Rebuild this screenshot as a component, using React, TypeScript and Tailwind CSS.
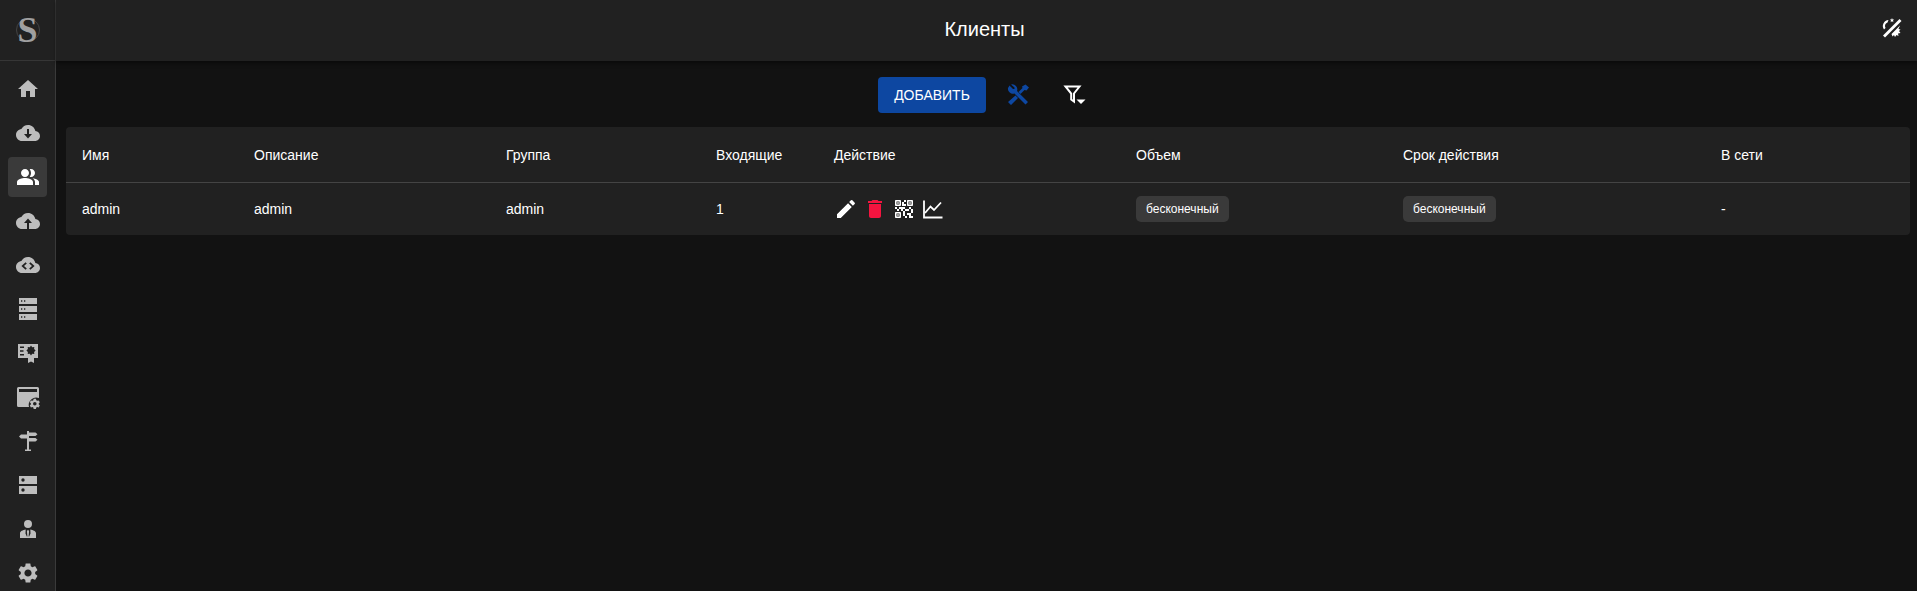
import type { ReactNode } from "react"

function Icon({ children, className = "" }: { children: ReactNode; className?: string }) {
    return (
        <svg viewBox="0 0 24 24" fill="currentColor" className={`block h-6 w-6 ${className}`}>
            {children}
        </svg>
    )
}

const CLOUD = "M19.35 10.04C18.67 6.59 15.64 4 12 4 9.11 4 6.6 5.64 5.35 8.04 2.34 8.36 0 10.91 0 14c0 3.31 2.69 6 6 6h13c2.76 0 5-2.24 5-5 0-2.64-2.05-4.78-4.65-4.96"

const navIcons: ReactNode[] = [
    <path key="home" d="M10 20v-6h4v6h5v-8h3L12 3 2 12h3v8z" />,
    <path key="down" fillRule="evenodd" d={`${CLOUD}M11 8v5H8l4 4.5 4-4.5h-3V8z`} />,
    <path key="group" d="M16.67 13.13C18.04 14.06 19 15.32 19 17v3h4v-3c0-2.18-3.57-3.47-6.33-3.87M15 12c2.21 0 4-1.79 4-4s-1.79-4-4-4c-.47 0-.91.1-1.33.24C14.5 5.27 15 6.58 15 8s-.5 2.73-1.33 3.76c.42.14.86.24 1.33.24M9 12c2.21 0 4-1.79 4-4s-1.79-4-4-4-4 1.79-4 4 1.79 4 4 4m0 1c-2.67 0-8 1.34-8 4v3h16v-3c0-2.66-5.33-4-8-4" />,
    <path key="up" fillRule="evenodd" d={`${CLOUD}M11 20v-6H8l4-4.5 4 4.5h-3v6z`} />,
    <path key="code" fillRule="evenodd" d={`${CLOUD}M9.6 9.2 5.4 13l4.2 3.8 1.2-1.3L8 13l2.8-2.5zM14.4 9.2l-1.2 1.3L16 13l-2.8 2.5 1.2 1.3 4.2-3.8z`} />,
    <path key="storage" fillRule="evenodd" d="M3 1h18v6H3zM5 3.300v1.400h1.300V3.300zM8 3.300v1.400h1.300V3.300zM3 9h18v6H3zM5 11.300v1.400h1.300v-1.400zM8 11.300v1.400h1.300v-1.400zM3 17h18v6H3zM5 19.300v1.400h1.300v-1.400zM8 19.300v1.400h1.300v-1.400z" />,
    <path key="cert" fillRule="evenodd" d="M2 3h20v14h-4v5l-3-1.600L12 22v-5H2zM4 5.400V7h4V5.400zM4 9.200v1.600h3.500V9.200zM4 13v1.600h4V13zM15 4.500l-1.200 1.700-2.100-.2.2 2.100L10.400 9.500l1.500 1.400-.2 2.100 2.100-.2 1.200 1.700 1.200-1.700 2.100.2-.2-2.100 1.500-1.400-1.500-1.400.2-2.100-2.100.2z" />,
    <g key="web">
        <path fillRule="evenodd" d="M2.500 2h19A1.500 1.500 0 0 1 23 3.500V13a7.500 7.500 0 0 0-10 9H2.500A1.500 1.500 0 0 1 1 20.500v-17A1.500 1.500 0 0 1 2.500 2M3 4v3h18V4z" />
        <path fillRule="evenodd" d="M17.700 13.500h2.600l.3 1.500 1.200.7 1.500-.5 1.300 2.200-1.200 1v1.400l1.200 1-1.300 2.200-1.500-.5-1.200.7-.3 1.500h-2.600l-.3-1.500-1.200-.7-1.500.5-1.300-2.200 1.200-1v-1.400l-1.200-1 1.300-2.200 1.500.5 1.200-.7zM19 17a2 2 0 1 0 0 4 2 2 0 0 0 0-4" transform="translate(1.700 1.700) scale(.9)" />
    </g>,
    <path key="sign" d="M11 2h2v1.500h6.500L21.500 5.300 19.500 7H13v2h6.500l2 1.800-2 1.700H13V20.500h2V22H9v-1.500h2V9.500H5L3 7.500 5 5.500h6z" />,
    <path key="dns" fillRule="evenodd" d="M3 3h18v8H3zM7 5.300a1.700 1.700 0 1 0 0 3.400 1.700 1.700 0 0 0 0-3.400M3 13h18v8H3zM7 15.300a1.700 1.700 0 1 0 0 3.400 1.700 1.700 0 0 0 0-3.400" />,
    <path key="person" fillRule="evenodd" d="M12 3a4 4 0 1 1 0 8 4 4 0 0 1 0-8M9.700 12.500l-.2 4 1.300 3h.6l-.5-5.500 1.100-1.200 1.100 1.200-.5 5.500h.6l1.300-3-.2-4c2.800.5 5.700 1.800 5.700 3.800V21H4v-4.700c0-2 2.900-3.300 5.700-3.800" />,
    <path key="gear" d="M19.140 12.940c.04-.3.06-.61.06-.94 0-.32-.02-.64-.07-.94l2.030-1.580c.18-.14.23-.41.120-.61l-1.920-3.320c-.12-.22-.37-.29-.59-.22l-2.390.96c-.5-.38-1.030-.7-1.620-.94l-.36-2.540c-.04-.24-.24-.41-.48-.41h-3.840c-.24 0-.43.17-.47.41l-.36 2.540c-.59.24-1.130.57-1.620.94l-2.390-.96c-.22-.08-.47 0-.59.22L2.740 8.870c-.12.21-.08.47.12.61l2.030 1.580c-.05.3-.09.63-.09.94s.02.64.07.94l-2.030 1.580c-.18.14-.23.41-.12.61l1.920 3.320c.12.22.37.29.59.22l2.390-.96c.5.38 1.030.7 1.620.94l.36 2.540c.05.24.24.41.48.41h3.840c.24 0 .44-.17.47-.41l.36-2.540c.59-.24 1.130-.56 1.620-.94l2.390.96c.22.08.47 0 .59-.22l1.920-3.320c.12-.22.07-.47-.12-.61zM12 15.600c-1.980 0-3.600-1.620-3.600-3.600s1.620-3.600 3.600-3.600 3.600 1.620 3.600 3.600-1.620 3.600-3.600 3.600" />,
]

const columns = [
    { label: "Имя", width: "w-[172px]" },
    { label: "Описание", width: "w-[252px]" },
    { label: "Группа", width: "w-[210px]" },
    { label: "Входящие", width: "w-[118px]" },
    { label: "Действие", width: "w-[302px]" },
    { label: "Объем", width: "w-[267px]" },
    { label: "Срок действия", width: "w-[318px]" },
    { label: "В сети", width: "w-[205px]" },
]

function Chip() {
    return (
        <span className="inline-flex h-[26px] items-center rounded-[5px] bg-[#3a3a3a] px-2.5 text-xs text-white">
            бесконечный
        </span>
    )
}

export default function App() {
    return (
        <div className="flex h-[591px] overflow-hidden bg-[#121212] font-['Liberation_Sans',Arial,sans-serif] text-white">
            <aside className="flex w-14 shrink-0 flex-col border-r border-[#3a3a3a] bg-[#212121]">
                <div className="flex h-[61px] shrink-0 items-center justify-center border-b border-[#363636]">
                    <div className="flex h-6 w-6 items-center justify-center rounded-full border border-[#444]">
                        <span className="font-['Liberation_Serif',serif] text-[36px] leading-none font-bold text-[#a0a0a0]">S</span>
                    </div>
                </div>
                <nav className="flex flex-col items-center pt-1.5">
                    {navIcons.map((icon, i) => (
                        <div
                            key={i}
                            className={`flex h-11 w-full shrink-0 items-center justify-center ${i === 2 ? "text-white" : "text-[#bdbdbd]"}`}
                        >
                            <div className={`flex h-10 w-[39px] items-center justify-center rounded-[4px] ${i === 2 ? "bg-[#3a3a3a]" : ""}`}>
                                <Icon>{icon}</Icon>
                            </div>
                        </div>
                    ))}
                </nav>
            </aside>

            <div className="flex min-w-0 flex-1 flex-col">
                <header className="relative flex h-[61px] shrink-0 items-center justify-center bg-[#212121] pr-1 pb-1 shadow-[0_2px_4px_rgba(0,0,0,0.5)]">
                    <h1 className="text-xl font-normal">Клиенты</h1>
                    <svg viewBox="0 0 24 24" fill="currentColor" className="absolute top-[16px] right-[13px] h-6 w-6">
                        <path d="M8.500 4a6 6 0 0 0-4.500 9.500l1.500-1.500A4.200 4.200 0 0 1 7.500 6.500z" />
                        <path d="m12 2 .6 1.500 1.600.1-1.200 1 .4 1.600-1.400-.9-1.400.9.4-1.600-1.200-1 1.600-.1z" />
                        <path d="M19.500 3 21.500 5 5 21.500 3 19.500z" />
                        <path d="m20 9.500-8.500 8.500 1 2.500 1.500-1.500 1 2 1.500-2 2 1-.5-2.500 2.500-.5-1.500-2 1.500-1.500-2-.5z" />
                    </svg>
                </header>

                <main className="flex-1 pr-[7px] pl-[10px]">
                    <div className="flex h-[66px] items-center justify-center pt-[2px] pr-[5px]">
                        <button className="mr-3 h-9 w-[108px] rounded-[4px] bg-[#0d47a1] text-sm text-white uppercase">Добавить</button>
                        <button className="mr-[15px] flex h-10 w-10 items-center justify-center text-[#0d47a1]">
                            <svg viewBox="0 0 24 24" fill="currentColor" className="h-6 w-6">
                                <path d="M3.500 2.500 7 6h1.500V4.500L5 1.500a5 5 0 0 1 6 6.500l11 11-2.500 2.500-11-11A5 5 0 0 1 2 5z" />
                                <path d="M19.500 1.500 23 4.500l-2.500 3-2-.5-4 4-2-2 4-4-.5-1.500zM9.500 12.500l2.500 2.500-7 7-3-3z" />
                            </svg>
                        </button>
                        <button className="flex h-10 w-10 items-center justify-center text-white">
                            <svg viewBox="0 0 24 24" className="h-6 w-6 overflow-visible">
                                <path d="M4.500 3.500H18.500L13 10.500V18.500L10.200 16.500V10.500Z" fill="none" stroke="currentColor" strokeWidth="2" />
                                <path d="M15.500 16.500H24.500L20 21z" fill="currentColor" />
                            </svg>
                        </button>
                    </div>

                    <div className="overflow-hidden rounded-[4px] bg-[#212121]">
                        <table className="w-full table-fixed border-collapse text-left text-sm">
                            <thead>
                                <tr className="h-[55px] border-b border-[#444]">
                                    {columns.map((c) => (
                                        <th key={c.label} className={`${c.width} px-4 pt-[2px] font-normal`}>
                                            {c.label}
                                        </th>
                                    ))}
                                </tr>
                            </thead>
                            <tbody>
                                <tr className="h-[53px]">
                                    <td className="px-4">admin</td>
                                    <td className="px-4">admin</td>
                                    <td className="px-4">admin</td>
                                    <td className="px-4">1</td>
                                    <td className="px-4">
                                        <div className="flex gap-[5px]">
                                            <Icon><path d="M3 17.250V21h3.750L17.810 9.940l-3.750-3.750zM20.710 7.040c.39-.39.39-1.020 0-1.410l-2.340-2.340a.9959.9959 0 0 0-1.410 0l-1.830 1.830 3.750 3.750z" /></Icon>
                                            <Icon className="text-[#f5143f]"><path d="M6 19c0 1.100.9 2 2 2h8c1.100 0 2-.9 2-2V7H6zM19 4h-3.500l-1-1h-5l-1 1H5v2h14z" /></Icon>
                                            <Icon><path d="M15 21h-2v-2h2zm-2-7h-2v5h2zm8-2h-2v4h2zm-2-2h-2v2h2zM7 12H5v2h2zm-2-2H3v2h2zm7-5h2V3h-2zm-7.500-.5v3h3v-3zM8 9H4c-.55 0-1-.45-1-1V4c0-.55.45-1 1-1h4c.55 0 1 .45 1 1v4c0 .55-.45 1-1 1m-3.500 7.500v3h3v-3zM8 21H4c-.55 0-1-.45-1-1v-4c0-.55.45-1 1-1h4c.55 0 1 .45 1 1v4c0 .55-.45 1-1 1m8.500-16.500v3h3v-3zM20 9h-4c-.55 0-1-.45-1-1V4c0-.55.45-1 1-1h4c.55 0 1 .45 1 1v4c0 .55-.45 1-1 1m-1 10v-3h-4v2h2v3h4v-2zm-2-7h-4v2h4zm-4-2H7v2h2v2h2v-2h2zm1-1V7h-2V5h-2v4zM6.750 5.250h-1.500v1.500h1.500zm0 12h-1.500v1.500h1.500zm12-12h-1.500v1.500h1.500z" /></Icon>
                                            <svg viewBox="0 0 24 24" fill="none" stroke="currentColor" strokeWidth="1.800" className="block h-6 w-6">
                                                <path d="M3 3.500V20.500H21.500" />
                                                <path d="M4 16 9.500 9.500 13 13 20 5.500" />
                                            </svg>
                                        </div>
                                    </td>
                                    <td className="px-4"><Chip /></td>
                                    <td className="px-4"><Chip /></td>
                                    <td className="px-4">-</td>
                                </tr>
                            </tbody>
                        </table>
                    </div>
                </main>
            </div>
        </div>
    )
}
